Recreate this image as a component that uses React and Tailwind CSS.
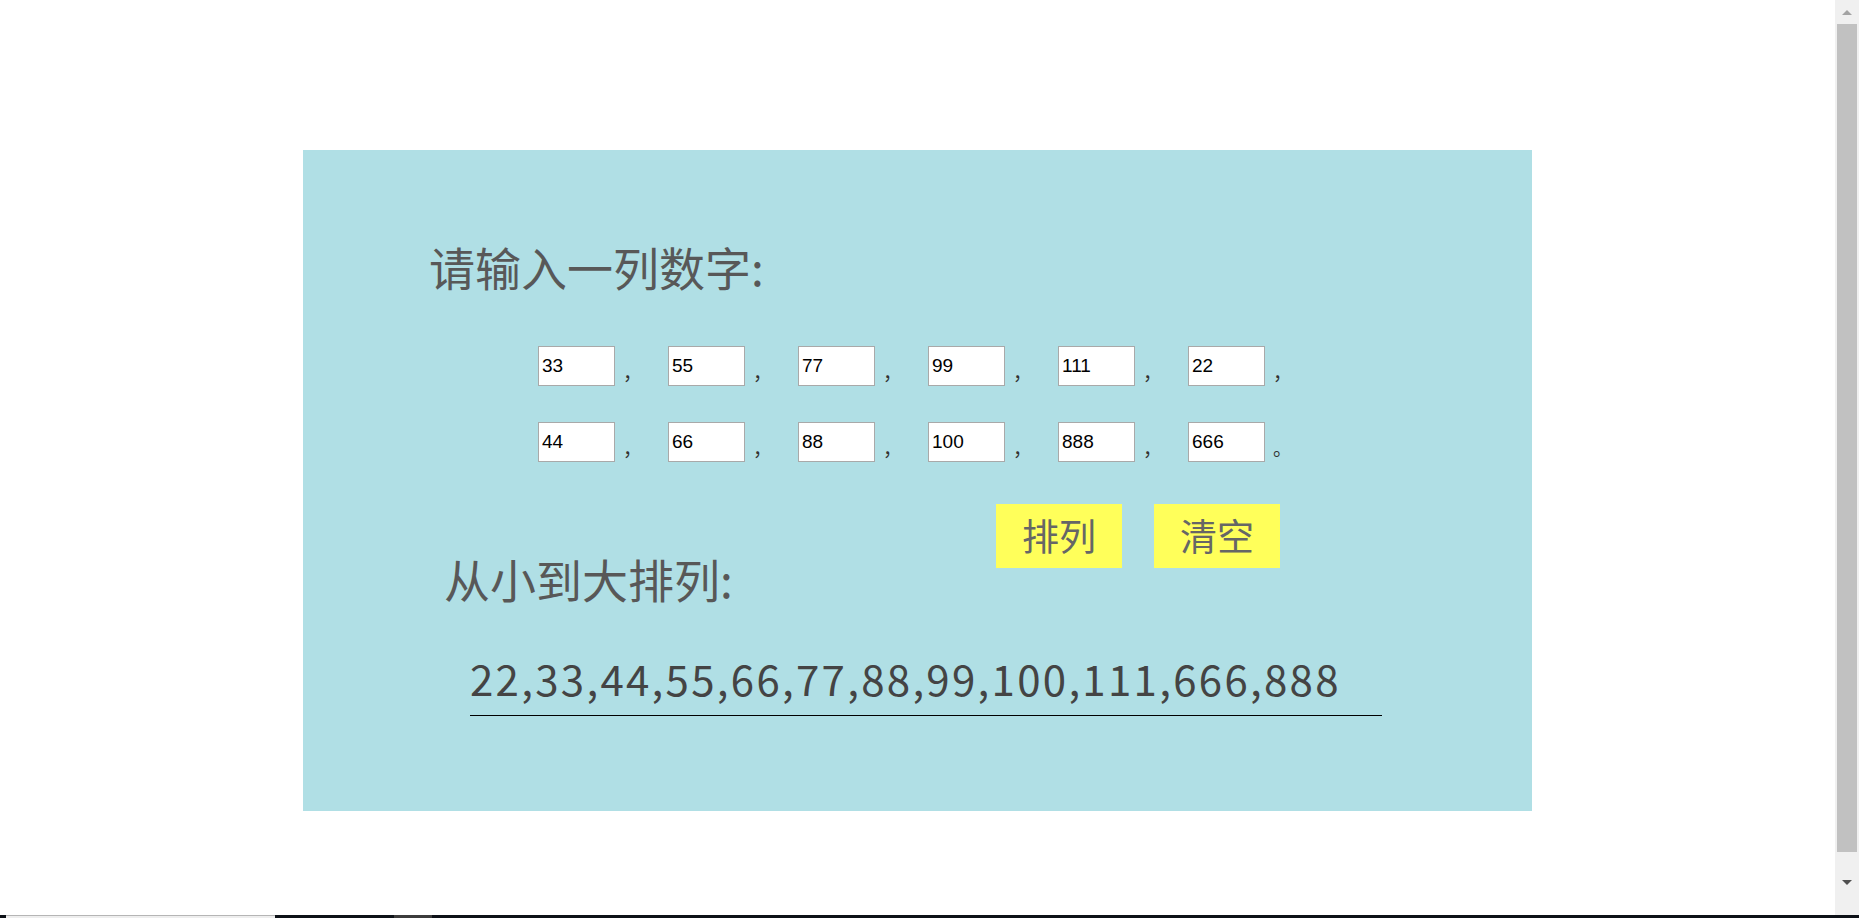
import { useState } from "react";

const first = ["33", "55", "77", "99", "111", "22"];
const second = ["44", "66", "88", "100", "888", "666"];

const cjk = { fontFamily: '"Noto Sans CJK SC", "Noto Sans", sans-serif' };

const NumCell = ({ value, mark }) => (
  <div className="flex w-[130px] items-end">
    <input
      type="text"
      defaultValue={value}
      className="h-[40px] w-[77px] border border-[#a9a9a9] bg-white pl-[3px] text-[19px] text-black outline-none"
      style={{ fontFamily: '"Liberation Sans", Arial, sans-serif' }}
    />
    <span className="pb-[5px] pl-[8px] text-[19px] leading-none text-[#333]" style={cjk}>
      {mark}
    </span>
  </div>
);

const App = () => {
  const [nums, setNums] = useState([...first, ...second]);
  const [result, setResult] = useState("22,33,44,55,66,77,88,99,100,111,666,888");

  const sortNums = () => {
    const sorted = nums.map(Number).sort((a, b) => a - b);
    setResult(sorted.join(","));
  };

  return (
    <div className="flex h-[918px] flex-col overflow-hidden bg-white">
      <div className="flex h-[915px]">
        {/* page */}
        <div className="flex-1">
          <div
            className="mx-auto mt-[150px] h-[661px] w-[1229px] bg-[#b0dfe5]"
            style={cjk}
          >
            <h2 className="pl-[126px] pt-[93px] text-[46px] font-normal leading-[46px] text-[#585858]">
              请输入一列数字:
            </h2>

            <div className="mt-[57px] flex flex-col gap-[36px] pl-[235px]">
              <div className="flex">
                {first.map((n) => (
                  <NumCell key={n} value={n} mark="，" />
                ))}
              </div>
              <div className="flex">
                {second.map((n, i) => (
                  <NumCell key={n} value={n} mark={i === 5 ? "。" : "，"} />
                ))}
              </div>
            </div>

            <div className="mt-[42px] flex pl-[141px]">
              <h2 className="mt-[51px] w-[552px] text-[46px] font-normal leading-[46px] text-[#585858]">
                从小到大排列:
              </h2>
              <div className="flex h-[64px] gap-[32px]">
                <button
                  onClick={sortNums}
                  className="h-[64px] w-[126px] bg-[#ffff5a] text-[37px] text-[#666]"
                >
                  排列
                </button>
                <button
                  onClick={() => setResult("")}
                  className="h-[64px] w-[126px] bg-[#ffff5a] text-[37px] text-[#666]"
                >
                  清空
                </button>
              </div>
            </div>

            <div className="ml-[167px] mt-[56px] h-[59px] w-[912px] border-b border-black text-[42px] leading-[42px] tracking-[2.3px] text-[#444]">
              {result}
            </div>
          </div>
        </div>

        {/* scrollbar */}
        <div className="flex w-[24px] flex-col items-center bg-[#f0f0f0]">
          <div className="mt-[10px] h-0 w-0 border-x-[5px] border-b-[5px] border-x-transparent border-b-[#a3a3a3]" />
          <div className="mt-[9px] h-[828px] w-[20px] bg-[#c1c1c1]" />
          <div className="mt-[28px] h-0 w-0 border-x-[5px] border-t-[5px] border-x-transparent border-t-[#505050]" />
        </div>
      </div>

      {/* bottom strip */}
      <div className="flex h-[3px] bg-[#0d1117]">
        <div className="w-[6px]" />
        <div className="w-[269px] border-t border-[#b5b5b5] bg-[#eeeeee]" />
        <div className="w-[119px]" />
        <div className="w-[38px] bg-[#3c3c3c]" />
      </div>
    </div>
  );
};

export default App;
